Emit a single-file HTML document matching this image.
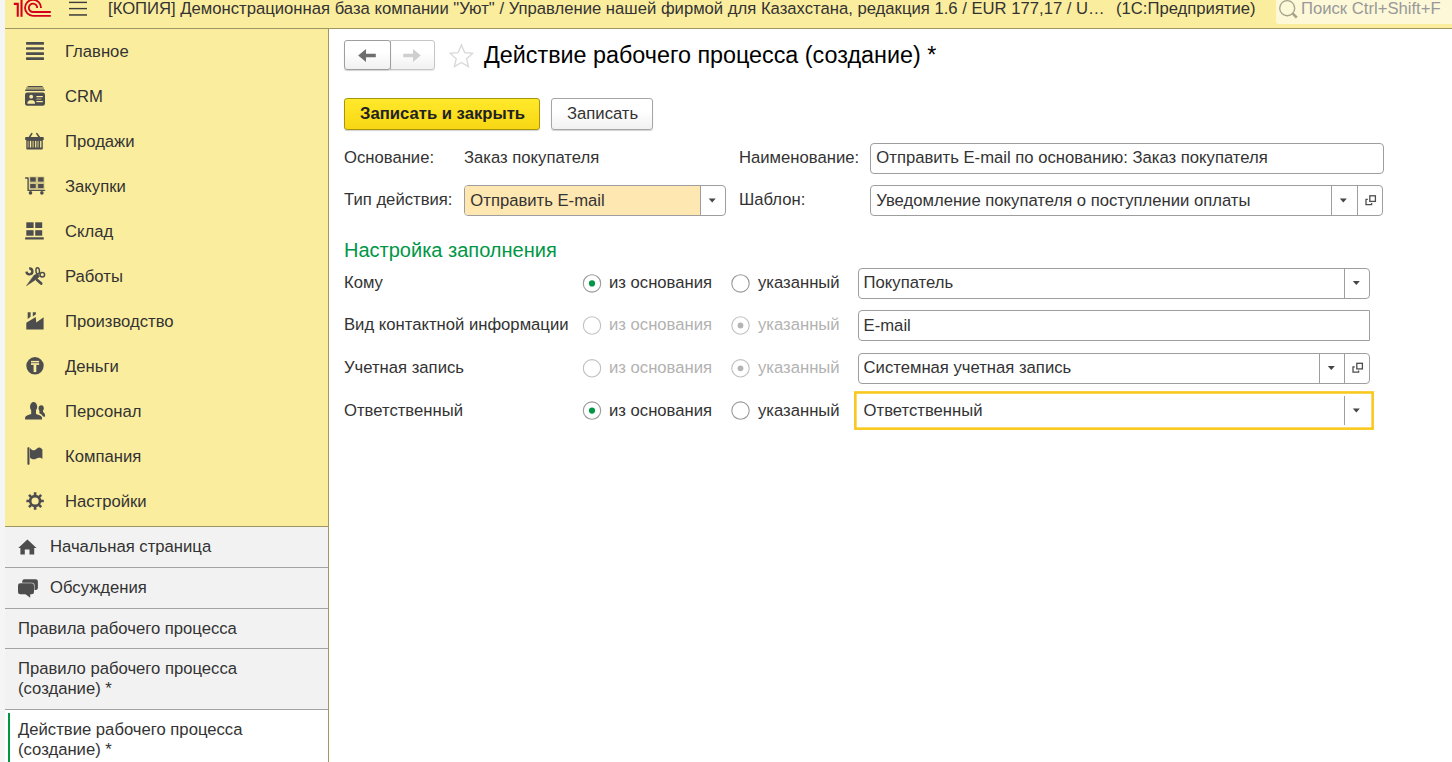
<!DOCTYPE html>
<html lang="ru">
<head>
<meta charset="utf-8">
<title>Действие рабочего процесса (создание) *</title>
<style>
*{box-sizing:border-box;margin:0;padding:0}
html,body{width:1452px;height:762px;overflow:hidden;background:#fff}
body{font-family:"Liberation Sans",sans-serif;font-size:16.67px;color:#333;position:relative}
.abs{position:absolute}
.t{position:absolute;white-space:nowrap;line-height:20px;color:#333}
#strip{left:0;top:0;width:5px;height:762px;background:#f5f5f6}
#hdr{left:5px;top:0;width:1447px;height:29px;background:#fbed9e;border-bottom:1px solid #9f9662}
#side{left:5px;top:29px;width:324px;height:498px;background:#fbed9e;border-right:1px solid #9f9662;border-bottom:1px solid #9f9662}
#wins{left:5px;top:527px;width:324px;height:235px;background:#f2f2f2;border-right:1px solid #9f9662}
.ln{position:absolute;left:5px;width:323px;height:1px;background:#a3a3a3}
.btn{position:absolute;border:1px solid #a6a6a6;border-radius:3px;background:linear-gradient(#fff 40%,#f1f1f1);box-shadow:0 1px 1px rgba(0,0,0,.18)}
.inp{position:absolute;border:1px solid #9e9e9e;border-radius:4px;background:#fff;height:31px}
.sep{position:absolute;top:0;width:1px;height:29px;background:#9e9e9e}
.gray{color:#b2b2b2}
</style>
</head>
<body>
<div id="strip" class="abs"></div>
<div id="hdr" class="abs"></div>
<div class="abs" style="left:1276px;top:0;width:176px;height:24px;background:#fdf8d8;border-radius:0 0 0 3px"></div>
<div id="side" class="abs"></div>
<div id="wins" class="abs"></div>
<div class="abs" style="left:5px;top:710px;width:323px;height:52px;background:#fff"></div>
<div class="abs" style="left:8px;top:713px;width:2px;height:49px;background:#009646"></div>
<div class="ln" style="top:567px"></div>
<div class="ln" style="top:608px"></div>
<div class="ln" style="top:648px"></div>
<div class="ln" style="top:709px"></div>
<div class="t" style="left:108px;top:-1.10px;">[КОПИЯ] Демонстрационная база компании "Уют" / Управление нашей фирмой для Казахстана, редакция 1.6 / EUR 177,17 / U…</div>
<div class="t" style="left:1116px;top:-1.10px;">(1С:Предприятие)</div>
<div class="t" style="left:1301px;top:-1.10px;color:#999">Поиск Ctrl+Shift+F</div>
<div class="t" style="left:65px;top:41.80px;">Главное</div>
<div class="t" style="left:65px;top:86.80px;">CRM</div>
<div class="t" style="left:65px;top:131.80px;">Продажи</div>
<div class="t" style="left:65px;top:176.80px;">Закупки</div>
<div class="t" style="left:65px;top:221.80px;">Склад</div>
<div class="t" style="left:65px;top:266.80px;">Работы</div>
<div class="t" style="left:65px;top:311.80px;">Производство</div>
<div class="t" style="left:65px;top:356.80px;">Деньги</div>
<div class="t" style="left:65px;top:401.80px;">Персонал</div>
<div class="t" style="left:65px;top:446.80px;">Компания</div>
<div class="t" style="left:65px;top:491.80px;">Настройки</div>
<div class="t" style="left:50px;top:536.60px;">Начальная страница</div>
<div class="t" style="left:50px;top:577.60px;">Обсуждения</div>
<div class="t" style="left:18px;top:618.60px;">Правила рабочего процесса</div>
<div class="t" style="left:18px;top:658.60px;">Правило рабочего процесса</div>
<div class="t" style="left:18px;top:678.60px;">(создание) *</div>
<div class="t" style="left:18px;top:719.60px;">Действие рабочего процесса</div>
<div class="t" style="left:18px;top:739.60px;">(создание) *</div>
<svg class="abs" style="left:0;top:0" width="340" height="762" viewBox="0 0 340 762">
<!-- 1C logo -->
<g fill="none" stroke="#d5001c" stroke-width="1.85">
<path d="M13.8 3.9 H17.75 V16.8" stroke-width="2.1"/>
<path d="M21.5 -1 V16.8" stroke-width="2.1"/>
<path d="M41 7.9 A8 8 0 1 0 33 15.8 H50.8"/>
<path d="M37.2 7.9 A4.2 4.2 0 1 0 33 12 H50.8"/>
</g>
<!-- hamburger -->
<g fill="#3c3c3c">
<rect x="69" y="1.7" width="18" height="1.4"/>
<rect x="69" y="7.9" width="18" height="1.4"/>
<rect x="69" y="14.2" width="18" height="1.5"/>
</g>
<g fill="#4d4d4d">
<!-- Главное -->
<rect x="26" y="42.1" width="18" height="2.6" rx=".6"/>
<rect x="26" y="47.2" width="18" height="2.6" rx=".6"/>
<rect x="26" y="52.3" width="18" height="2.6" rx=".6"/>
<rect x="26" y="57.3" width="18" height="2.6" rx=".6"/>
<!-- CRM -->
<rect x="27.4" y="85.9" width="15.4" height="1.3" rx=".6"/>
<rect x="26" y="87.2" width="18" height="2.4" fill="#8f8862" opacity=".75"/>
<rect x="25" y="89.4" width="20" height="1.7" rx=".8"/>
<rect x="25" y="92.5" width="20" height="13.2" rx="2.2"/>
<g fill="#fbed9e">
<circle cx="31.2" cy="96.7" r="1.9"/>
<path d="M27.3 103.8 L27.6 102 Q28 100.6 29.8 100.2 L32.6 100.2 Q34.4 100.6 34.8 102 L35.1 103.8 Z"/>
<rect x="36.4" y="96" width="6.4" height="1.2"/>
<rect x="36.4" y="98.5" width="5" height="1.2" opacity=".55"/>
<rect x="36.4" y="101" width="6.4" height="1.2"/>
</g>
<!-- Продажи -->
<path d="M31.8 133.6 L29.4 137.2 M36.8 133.6 L39.4 137.2" stroke="#4d4d4d" stroke-width="1.6" stroke-linecap="round"/>
<rect x="25.1" y="137" width="18.7" height="3.1" rx=".9"/>
<rect x="26.3" y="139.5" width="16.5" height="10.1" rx="1"/>
<g>
<rect x="27.4" y="140.9" width="1.4" height="6.6" fill="#a39b6c"/>
<rect x="29.9" y="140.9" width="1.3" height="6.6" fill="#fbed9e"/>
<rect x="32.2" y="140.9" width="1.8" height="6.6" fill="#a39b6c"/>
<rect x="35.1" y="140.9" width="1.2" height="6.6" fill="#fbed9e"/>
<rect x="37.2" y="140.9" width="1.7" height="6.6" fill="#a39b6c"/>
<rect x="40.1" y="140.9" width="1.3" height="6.6" fill="#fbed9e"/>
</g>
<!-- Закупки -->
<rect x="29.4" y="176.6" width="15" height="12.6" fill="#8f8862" opacity=".4"/>
<path d="M25.6 178 H28.1 V190.4 H44.6" fill="none" stroke="#4d4d4d" stroke-width="1.35" stroke-linecap="round" stroke-linejoin="round"/>
<circle cx="30.5" cy="192.9" r="1.8"/>
<circle cx="41.9" cy="192.9" r="1.8"/>
<rect x="30.2" y="177.3" width="5.5" height="4.3"/>
<rect x="38.1" y="177.3" width="5.5" height="4.3"/>
<rect x="30.2" y="184" width="5.5" height="4.1"/>
<rect x="38.1" y="184" width="5.5" height="4.1"/>
<!-- Склад -->
<rect x="26.3" y="222.3" width="7.3" height="5.7"/>
<rect x="35.2" y="222.3" width="7" height="5.7"/>
<rect x="26.3" y="230.2" width="7.3" height="5.5"/>
<rect x="35.2" y="230.2" width="7" height="5.5"/>
<rect x="25.1" y="237.3" width="18.7" height="2.3" rx=".4"/>
<!-- Работы -->
<path d="M29.2 268.5 A2.95 2.95 0 1 1 26.5 271.7" fill="none" stroke="#4d4d4d" stroke-width="2.4"/>
<path d="M37.2 279.9 L41.2 283.6" stroke="#4d4d4d" stroke-width="2.7" stroke-linecap="round"/>
<ellipse cx="37.7" cy="270.9" rx="1.75" ry="3.2" fill="none" stroke="#4d4d4d" stroke-width="1.5" transform="rotate(-6 37.7 270.9)"/>
<ellipse cx="42.3" cy="274.8" rx="2.3" ry="2.2" fill="none" stroke="#4d4d4d" stroke-width="1.5"/>
<path d="M34 275.3 L36.2 274.3 L37.6 274.2 L39.6 276.3 L37.4 278.5 L26.5 285.7 Z" stroke="#4d4d4d" stroke-width=".5" stroke-linejoin="round"/>
<!-- Производство -->
<path d="M26.3 329.6 V322.8 L35.7 317 L36.3 322.4 L43.6 317.2 V329.6 Z"/>
<path d="M27.7 312.3 H30.6 V316.8 L27.7 319 Z"/>
<path d="M32.8 312.3 H35.9 V314.3 L32.8 316.5 Z"/>
<!-- Деньги -->
<circle cx="35" cy="365.8" r="8.7"/>
<g fill="#fbed9e">
<rect x="31" y="360.9" width="8.1" height="1.1"/>
<rect x="31" y="362" width="8.1" height="1.2" opacity=".35"/>
<rect x="31" y="363.2" width="8.1" height="1.7"/>
<rect x="33.6" y="364.8" width="2.7" height="7.3"/>
</g>
<!-- Персонал -->
<ellipse cx="33.6" cy="406.8" rx="3.6" ry="4.7"/>
<path d="M25.1 419.6 V417.6 Q25.3 416 27.5 415.3 L31.2 414 V409.5 H36 V414 L39.6 415.3 Q41.8 416 42 417.6 V419.6 Z"/>
<ellipse cx="41.2" cy="408.2" rx="2.6" ry="3"/>
<path d="M39.4 410.3 H43 V412 Q45.4 413.3 45.1 416.8 L43 416.4 Q42 414.2 39.4 413.2 Z"/>
<!-- Компания -->
<rect x="27.4" y="447.3" width="2.1" height="17.4" rx=".7"/>
<path d="M30 447.9 C31.5 450 33.4 450.7 35 450 C36.5 449.3 37.5 447.5 39.2 447.5 C40.8 447.5 42.4 449.5 42.4 449.5 L42.4 459 C41.5 458 40.5 457.6 39 457.7 C37 457.9 36 459.3 33.6 459.3 C32 459.3 30.8 458.5 30 457.7 Z"/>
<!-- Настройки -->
<circle cx="35.1" cy="501" r="4.9" fill="none" stroke="#4d4d4d" stroke-width="2.6"/>
<g stroke="#4d4d4d" stroke-width="2.6">
<path d="M35.1 495.4 V492.3 M35.1 506.6 V509.7 M29.5 501 H26.4 M40.7 501 H43.8"/>
<path d="M31.2 497.1 L29 494.9 M39 497.1 L41.2 494.9 M31.2 504.9 L29 507.1 M39 504.9 L41.2 507.1"/>
</g>
<!-- home -->
<path d="M27.4 539.4 L36.5 548.1 H34.2 V554.5 H29.5 V549.6 H24.8 V554.5 H20.4 V548.1 H18.3 Z"/>
<!-- chat -->
<rect x="22.2" y="579.2" width="15.7" height="10.8" rx="2.2"/>
<rect x="17.5" y="582.7" width="17" height="12" rx="2.6" fill="#f2f2f2"/>
<rect x="18" y="583.2" width="16" height="11" rx="2.2"/>
<path d="M24.6 593.5 L30.2 597.7 V593.5 Z"/>
</g>
</svg>

<div class="btn" style="left:390px;top:40px;width:45px;height:30px;border-color:#c6c6c6;border-radius:0 3px 3px 0;box-shadow:0 1px 1px rgba(0,0,0,.1)"></div>
<div class="btn" style="left:344px;top:40px;width:47px;height:30px;border-color:#9e9e9e"></div>
<div class="t" style="left:484px;top:40.50px;font-size:23.33px;line-height:28px;color:#000">Действие рабочего процесса (создание) *</div>
<div class="btn" style="left:344px;top:98px;width:196px;height:32px;background:linear-gradient(#ffe92b,#f8d713);border-color:#a8940a"></div>
<div class="t" style="left:360px;top:103.80px;font-weight:bold;color:#222">Записать и закрыть</div>
<div class="btn" style="left:551px;top:98px;width:102px;height:32px"></div>
<div class="t" style="left:567px;top:103.80px;">Записать</div>
<div class="t" style="left:344px;top:147.80px;">Основание:</div>
<div class="t" style="left:464px;top:147.80px;">Заказ покупателя</div>
<div class="t" style="left:739px;top:147.80px;">Наименование:</div>
<div class="inp" style="left:870px;top:143px;width:514px"></div>
<div class="t" style="left:876.3px;top:148.00px;">Отправить E-mail по основанию: Заказ покупателя</div>
<div class="t" style="left:344px;top:189.80px;">Тип действия:</div>
<div class="inp" style="left:464px;top:185px;width:262px"><div class="abs" style="left:0;top:0;width:236px;height:29px;background:#ffe7b2;border-radius:3px 0 0 3px"></div><div class="sep" style="left:235px"></div></div>
<div class="t" style="left:470.3px;top:191.00px;">Отправить E-mail</div>
<div class="t" style="left:739px;top:189.80px;">Шаблон:</div>
<div class="inp" style="left:870px;top:185px;width:513px"><div class="sep" style="left:460px"></div><div class="sep" style="left:486px"></div></div>
<div class="t" style="left:876.3px;top:191.00px;">Уведомление покупателя о поступлении оплаты</div>
<div class="t" style="left:344px;top:238.40px;font-size:20px;line-height:24px;color:#009646">Настройка заполнения</div>
<div class="t" style="left:344px;top:272.80px;">Кому</div>
<div class="t" style="left:609px;top:272.80px;">из основания</div>
<div class="t" style="left:758px;top:272.80px;">указанный</div>
<div class="t" style="left:344px;top:315.30px;">Вид контактной информации</div>
<div class="t gray" style="left:609px;top:315.30px;">из основания</div>
<div class="t gray" style="left:758px;top:315.30px;">указанный</div>
<div class="t" style="left:344px;top:357.80px;">Учетная запись</div>
<div class="t gray" style="left:609px;top:357.80px;">из основания</div>
<div class="t gray" style="left:758px;top:357.80px;">указанный</div>
<div class="t" style="left:344px;top:401.30px;">Ответственный</div>
<div class="t" style="left:609px;top:401.30px;">из основания</div>
<div class="t" style="left:758px;top:401.30px;">указанный</div>
<div class="inp" style="left:858px;top:268px;width:512px"><div class="sep" style="left:485px"></div></div>
<div class="t" style="left:863.6px;top:273.00px;">Покупатель</div>
<div class="inp" style="left:858px;top:310px;width:512px;border-radius:4px 0 0 4px"></div>
<div class="t" style="left:863.6px;top:315.50px;">E-mail</div>
<div class="inp" style="left:858px;top:353px;width:512px"><div class="sep" style="left:460px"></div><div class="sep" style="left:485px"></div></div>
<div class="t" style="left:863.6px;top:357.70px;">Системная учетная запись</div>
<div class="t" style="left:863.6px;top:401.40px;">Ответственный</div>
<svg class="abs" style="left:0;top:0" width="1452" height="762" viewBox="0 0 1452 762">
<!-- search -->
<g fill="none" stroke="#a6a38c" stroke-width="1.35">
<circle cx="1287.2" cy="8.2" r="7.5"/>
<path d="M1292.8 13.6 L1296.8 17.7" stroke-width="2.6"/>
</g>
<!-- nav arrows -->
<path d="M358.2 55.5 L366 49 V53.7 H375.8 V57.3 H366 V62 Z" fill="#6e6e6e"/>
<path d="M420.8 55.5 L413 49 V53.7 H403.2 V57.3 H413 V62 Z" fill="#cfcfcf"/>
<!-- star -->
<path d="M461.4 44.9 L464.7 52.7 L472.6 53.4 L466.6 58.8 L468.4 66.7 L461.4 62.5 L454.4 66.7 L456.2 58.8 L450.2 53.4 L458.1 52.7 Z" fill="none" stroke="#d8d8d8" stroke-width="1.35" stroke-linejoin="miter"/>
<!-- dropdown arrows -->
<g fill="#454545">
<path d="M708.7 198.6 h7 l-3.5 4 z"/>
<path d="M1339.8 198.6 h7 l-3.5 4 z"/>
<path d="M1352.8 281.1 h7 l-3.5 4 z"/>
<path d="M1327.8 366.1 h7 l-3.5 4 z"/>
<path d="M1352.8 408.6 h7 l-3.5 4 z"/>
</g>
<!-- open icons -->
<g fill="none" stroke="#4d4d4d" stroke-width="1.3">
<rect x="1369.8" y="195.8" width="5.6" height="5.6"/>
<path d="M1367.8 199.3 H1366 V204.7 H1371.6 V203"/>
<rect x="1356.8" y="363.3" width="5.6" height="5.6"/>
<path d="M1354.8 366.8 H1353 V372.2 H1358.6 V370.5"/>
</g>
<!-- focus field -->
<rect x="855.35" y="392.45" width="517.3" height="36.2" fill="none" stroke="#f9c81e" stroke-width="2.6"/>
<rect x="1344" y="396" width="1" height="29" fill="#9e9e9e"/>
<!-- radios -->
<g fill="#fff" stroke="#9a9a9a" stroke-width="1.1">
<circle cx="592" cy="283.4" r="8.7"/>
<circle cx="740.5" cy="283.4" r="8.7"/>
<circle cx="592" cy="410.6" r="8.7"/>
<circle cx="740.5" cy="410.6" r="8.7"/>
</g>
<g fill="#fff" stroke="#c0c0c0" stroke-width="1.1">
<circle cx="592" cy="325.5" r="8.7"/>
<circle cx="740.5" cy="325.5" r="8.7"/>
<circle cx="592" cy="368.3" r="8.7"/>
<circle cx="740.5" cy="368.3" r="8.7"/>
</g>
<circle cx="592" cy="283.4" r="3.1" fill="#009646"/>
<circle cx="592" cy="410.6" r="3.1" fill="#009646"/>
<circle cx="740.5" cy="325.5" r="2.9" fill="#b4b4b4"/>
<circle cx="740.5" cy="368.3" r="2.9" fill="#b4b4b4"/>
</svg>

</body>
</html>
